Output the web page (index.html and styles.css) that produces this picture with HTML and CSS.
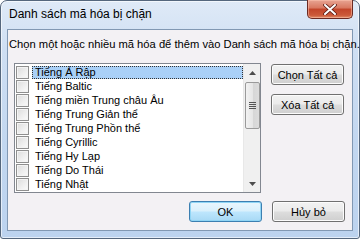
FILE: index.html
```html
<!DOCTYPE html>
<html lang="vi">
<head>
    <meta charset="UTF-8">
    <title>Danh sách mã hóa bị chặn</title>
    <link rel="stylesheet" href="styles.css">
</head>
<body>
    <div class="window">
        <div class="titlebar">
            <span class="title">Danh sách mã hóa bị chặn</span>
            <button class="close" type="button" aria-label="Đóng">
                <svg width="14" height="11" viewBox="0 0 14 11">
                    <path d="M2 1 L12 10 M12 1 L2 10" stroke="#5a1a12" stroke-width="3.6" stroke-linecap="round"/>
                    <path d="M2 1 L12 10 M12 1 L2 10" stroke="#ffffff" stroke-width="2" stroke-linecap="round"/>
                </svg>
            </button>
        </div>

        <div class="client">
            <p class="prompt">Chọn một hoặc nhiều mã hóa để thêm vào Danh sách mã hóa bị chặn.</p>

            <div class="main">
                <div class="listbox">
                    <ul class="items">
                        <li class="item"><span class="check"></span><span class="label selected">Tiếng Ả Rập</span></li>
                        <li class="item"><span class="check"></span><span class="label">Tiếng Baltic</span></li>
                        <li class="item"><span class="check"></span><span class="label">Tiếng miền Trung châu Âu</span></li>
                        <li class="item"><span class="check"></span><span class="label">Tiếng Trung Giản thể</span></li>
                        <li class="item"><span class="check"></span><span class="label">Tiếng Trung Phồn thể</span></li>
                        <li class="item"><span class="check"></span><span class="label">Tiếng Cyrillic</span></li>
                        <li class="item"><span class="check"></span><span class="label">Tiếng Hy Lạp</span></li>
                        <li class="item"><span class="check"></span><span class="label">Tiếng Do Thái</span></li>
                        <li class="item"><span class="check"></span><span class="label">Tiếng Nhật</span></li>
                    </ul>
                    <div class="scrollbar">
                        <div class="arrow">
                            <svg width="7" height="4" viewBox="0 0 7 4"><path d="M0 4 L3.5 0 L7 4 Z" fill="#4d4d4d"/></svg>
                        </div>
                        <div class="track">
                            <div class="thumb">
                                <span class="grip"></span>
                            </div>
                        </div>
                        <div class="arrow">
                            <svg width="7" height="4" viewBox="0 0 7 4"><path d="M0 0 L7 0 L3.5 4 Z" fill="#4d4d4d"/></svg>
                        </div>
                    </div>
                </div>

                <div class="side">
                    <button class="btn" type="button">Chọn Tất cả</button>
                    <button class="btn" type="button">Xóa Tất cả</button>
                </div>
            </div>

            <div class="footer">
                <button class="btn btn-default" type="button">OK</button>
                <button class="btn" type="button">Hủy bỏ</button>
            </div>
        </div>
    </div>
</body>
</html>
```

FILE: styles.css
```css
* {
    box-sizing: border-box;
}
body {
    margin: 0;
    font-family: "Liberation Sans", Arial, sans-serif;
    font-size: 11px;
    color: #000;
    background: #fff;
}
.window {
    width: 360px;
    height: 239px;
    display: flex;
    flex-direction: column;
    border: 1px solid #55677d;
    border-radius: 7px 7px 3px 3px;
    background: linear-gradient(to bottom, #dfeaf7 0%, #cfdff3 20%, #c2d7f0 60%, #bcd3ef 100%);
    box-shadow: inset 0 0 0 1px rgba(255,255,255,0.6);
}
.titlebar {
    height: 28px;
    display: flex;
    align-items: flex-start;
    justify-content: space-between;
    padding-left: 8px;
    padding-right: 6px;
}
.title {
    margin-top: 6px;
    font-size: 12px;
    line-height: 15px;
    color: #000;
}
.close {
    width: 46px;
    height: 19px;
    margin-top: -1px;
    padding: 0;
    border: 1px solid #6b2a22;
    border-top: none;
    border-radius: 0 0 5px 5px;
    background: linear-gradient(to bottom, #e8a493 0%, #d8775f 45%, #c2442a 50%, #cc5a3a 85%, #e08f6a 100%);
    box-shadow: inset 0 0 0 1px rgba(255,200,180,0.5);
    display: flex;
    align-items: center;
    justify-content: center;
}
.client {
    flex: 1;
    margin: 0 6px 7px 6px;
    border: 1px solid #8198b3;
    background: #f3f1f4;
    padding: 0 7px 8px 6px;
    display: flex;
    flex-direction: column;
}
.prompt {
    margin: 7px 0 0 -5px;
    font-size: 11.2px;
    line-height: 15px;
    white-space: nowrap;
}
.main {
    display: flex;
    align-items: flex-start;
    margin-top: 11px;
}
.listbox {
    width: 247px;
    height: 130px;
    border: 1px solid #828790;
    background: #fff;
    display: flex;
}
.items {
    list-style: none;
    margin: 0;
    padding: 1px 0 0 1px;
    flex: 1;
}
.item {
    height: 14px;
    display: flex;
    align-items: center;
}
.check {
    width: 13px;
    height: 13px;
    flex: none;
    border: 1px solid #8f8f8f;
    background: linear-gradient(135deg, #dcdcdc 0%, #f0f0f0 60%, #fbfbfb 100%);
    box-shadow: inset 0 0 0 1px #f4f4f4;
}
.label {
    margin-left: 3px;
    padding: 0 3px 0 3px;
    line-height: 13px;
    height: 13px;
    white-space: nowrap;
}
.label.selected {
    flex: 1;
    background: #a9d0f7;
    outline: 1px dotted #333;
    outline-offset: -1px;
}
.scrollbar {
    width: 17px;
    flex: none;
    display: flex;
    flex-direction: column;
    background: #f0f0f0;
    border-left: 1px solid #e8e8e8;
}
.arrow {
    height: 17px;
    display: flex;
    align-items: center;
    justify-content: center;
}
.track {
    flex: 1;
}
.thumb {
    margin: 1px 0 0 1px;
    width: 15px;
    height: 47px;
    border: 1px solid #9a9a9a;
    border-radius: 2px;
    background: linear-gradient(to right, #f2f2f2 0%, #e6e6e6 50%, #d6d6d6 51%, #dcdcdc 100%);
    display: flex;
    align-items: center;
    justify-content: center;
}
.grip {
    width: 7px;
    height: 7px;
    background: repeating-linear-gradient(to bottom, #555 0, #555 1px, transparent 1px, transparent 2px);
}
.side {
    display: flex;
    flex-direction: column;
    gap: 9px;
    margin-left: 10px;
    margin-top: 1px;
}
.btn {
    width: 73px;
    height: 21px;
    padding: 0;
    border: 1px solid #707070;
    border-radius: 3px;
    font-family: inherit;
    font-size: 11px;
    color: #000;
    background: linear-gradient(to bottom, #f2f2f2 0%, #ebebeb 48%, #dddddd 52%, #cfcfcf 100%);
    box-shadow: inset 0 0 0 1px #fcfcfc;
    cursor: pointer;
}
.footer {
    display: flex;
    justify-content: flex-end;
    gap: 10px;
    margin-top: auto;
}
.btn-default {
    border-color: #3c7fb1;
    background: linear-gradient(to bottom, #eaf6fd 0%, #d9f0fc 48%, #bee6fd 52%, #a7d9f5 100%);
    box-shadow: inset 0 0 0 1px #90d5f5;
}
```
